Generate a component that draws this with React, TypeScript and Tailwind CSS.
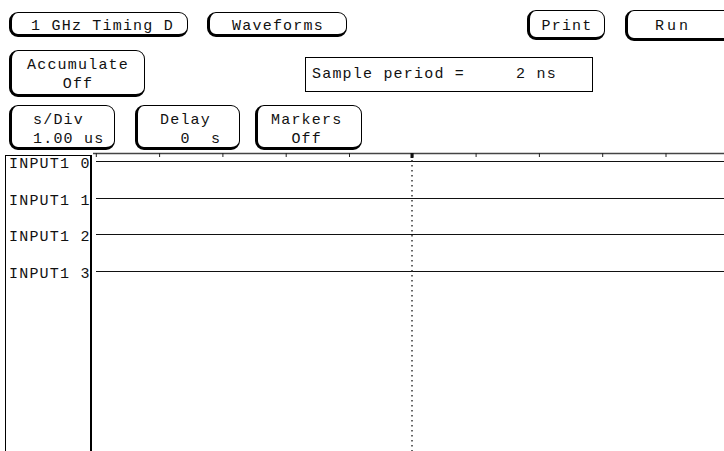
import type { ReactNode } from "react";

const keyCls = "shrink-0 rounded-[9px] border border-l-[3px] border-b-[3px] border-black bg-white leading-[19px] whitespace-pre";

function Key({ className, children }: { className: string; children: ReactNode }) {
  return <div className={`${keyCls} ${className}`}>{children}</div>;
}

const labels = ["INPUT1 0", "INPUT1 1", "INPUT1 2", "INPUT1 3"];
const ticks = Array.from({ length: 10 }, (_, k) => 4.3 + 63.3 * k);
const lanes = [9.5, 46.5, 82.5, 119.5];

export default function App() {
  return (
    <div className="relative h-[451px] w-[724px] overflow-hidden bg-white text-[15px] tracking-[1.2px] text-[#111] [font-family:'Liberation_Mono',monospace]">
      {/* top row */}
      <div className="flex h-[38px] items-start pt-[12px]">
        <Key className="ml-[9px] h-[25px] w-[179px] pl-[6px] pt-[4px] text-center">1 GHz Timing D</Key>
        <Key className="ml-[19px] h-[25px] w-[140px] pt-[4px] text-center">Waveforms</Key>
        <Key className="ml-[180px] -mt-[2px] h-[30px] w-[78px] pt-[6px] text-center">Print</Key>
        <Key className="ml-[20px] -mt-[2px] h-[31px] w-[110px] pl-[27px] pt-[6px] tracking-[3px]">Run</Key>
      </div>

      {/* accumulate + sample period */}
      <div className="mt-[12px] flex h-[47px] items-start">
        <Key className="ml-[9px] h-[47px] w-[136px] pt-[5px] text-center">
          <div>Accumulate</div>
          <div>Off</div>
        </Key>
        <div className="ml-[160px] mt-[7px] h-[35px] w-[288px] whitespace-pre border border-black pl-[6px] pt-[7px] leading-[19px]">
          Sample period =     2 ns
        </div>
      </div>

      {/* s/Div, delay, markers */}
      <div className="mt-[8px] flex h-[45px] items-start">
        <Key className="ml-[9px] h-[45px] w-[106px] pl-[21px] pt-[5px]">
          <div>s/Div</div>
          <div>1.00 us</div>
        </Key>
        <Key className="ml-[20px] h-[45px] w-[105px] pl-[22px] pt-[5px]">
          <div>Delay</div>
          <div>  0  s</div>
        </Key>
        <Key className="ml-[15px] h-[45px] w-[107px] pl-[13px] pt-[5px]">
          <div>Markers</div>
          <div>  Off</div>
        </Key>
      </div>

      {/* waveform display */}
      <div className="mt-[2px] flex items-start">
        <div className="ml-[5px] mt-[3px] h-[300px] w-[87px] shrink-0 border-l border-t border-r-2 border-black pl-[3px]">
          <div className="-mt-[1px] flex flex-col gap-[16.5px]">
            {labels.map((l) => (
              <div key={l} className="h-[20px] whitespace-pre leading-[20px]">{l}</div>
            ))}
          </div>
        </div>
        <svg width="632" height="299" className="shrink-0">
          <line x1="1" y1="1.5" x2="632" y2="1.5" stroke="#444" strokeWidth="1.5" />
          {ticks.map((x) => (
            <line key={x} x1={x} y1="1" x2={x} y2="5" stroke="#222" strokeWidth="1" />
          ))}
          <rect x="318.5" y="1" width="3" height="5" fill="#111" />
          {lanes.map((y) => (
            <line key={y} x1="4" y1={y} x2="632" y2={y} stroke="#111" strokeWidth="1" />
          ))}
          <line x1="320" y1="8" x2="320" y2="299" stroke="#333" strokeWidth="1.5" strokeDasharray="1.5 3.5" />
        </svg>
      </div>
    </div>
  );
}
